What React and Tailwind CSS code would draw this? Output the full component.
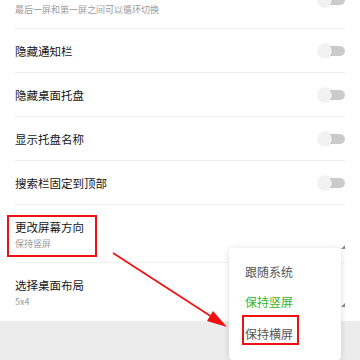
import React from "react";

const font = { fontFamily: '"Noto Sans CJK SC", "Noto Sans", sans-serif' };

function Toggle() {
  return (
    <div className="relative w-[27px] h-[14px] flex items-center shrink-0">
      <div className="ml-[4px] w-[23px] h-[10px] rounded-full bg-[#cbcbcb]" />
      <div className="absolute left-0 top-0 w-[14px] h-[14px] rounded-full bg-[#f2f2f2] shadow-[0_0_2px_rgba(0,0,0,0.15)]" />
    </div>
  );
}

function SimpleRow({ title }) {
  return (
    <div className="h-[44px] flex items-center justify-between border-b border-[#efefef]">
      <span className="text-[11.5px] leading-[16px] text-[#161616]">{title}</span>
      <Toggle />
    </div>
  );
}

function SubRow({ title, sub, toggle, last }) {
  return (
    <div className={`h-[58px] flex items-start justify-between ${last ? "" : "border-b border-[#efefef]"}`}>
      <div className="flex flex-col pt-[14px]">
        <span className="text-[11.5px] leading-[16px] text-[#161616]">{title}</span>
        <span className="mt-[3px] text-[9px] leading-[12px] text-[#9a9a9a]">{sub}</span>
      </div>
      {toggle && (
        <div className="pt-[22px]">
          <Toggle />
        </div>
      )}
    </div>
  );
}

export default function App() {
  return (
    <div className="relative w-[360px] h-[360px] overflow-hidden bg-[#ececec]" style={font}>
      <div className="bg-white mt-[-29px]">
        <div className="mx-[15px]">
          <SubRow title="循环滚动" sub="最后一屏和第一屏之间可以循环切换" toggle />
          <SimpleRow title="隐藏通知栏" />
          <SimpleRow title="隐藏桌面托盘" />
          <SimpleRow title="显示托盘名称" />
          <SimpleRow title="搜索栏固定到顶部" />
          <SubRow title="更改屏幕方向" sub="保持竖屏" />
          <SubRow title="选择桌面布局" sub="5x4" last />
        </div>
      </div>

      {/* annotation box round 更改屏幕方向 */}
      <div className="absolute left-[7px] top-[215px] w-[90px] h-[42px] border-2 border-[#ee1111]" />

      <div className="absolute left-[341px] top-[245px] w-0 h-0 border-l-[4px] border-l-transparent border-b-[4px] border-b-[#8a8a8a]" />
      <div className="absolute left-[341px] top-[303px] w-0 h-0 border-l-[4px] border-l-transparent border-b-[4px] border-b-[#8a8a8a]" />

      {/* popup menu */}
      <div className="absolute left-[229px] top-[248px] w-[112px] h-[112px] bg-white rounded-[4px] shadow-[0_1px_6px_rgba(0,0,0,0.15)] flex flex-col items-start pl-[13px] pt-[16px] text-[12px] leading-[16px]">
        <div className="pl-[3px] text-[#555]">跟随系统</div>
        <div className="pl-[3px] mt-[14px] text-[#2fb52f]">保持竖屏</div>
        <div className="mt-[5px] w-[57px] h-[30px] border-2 border-[#ee1111] pl-[1px] pt-[9px] text-[#555]">保持横屏</div>
      </div>

      <svg className="absolute left-0 top-0" width="360" height="360" viewBox="0 0 360 360">
        <line x1="113" y1="253" x2="212" y2="317" stroke="#f01010" strokeWidth="1.6" />
        <polygon points="227,327 207,321 213,311" fill="#f01010" />
      </svg>
    </div>
  );
}
